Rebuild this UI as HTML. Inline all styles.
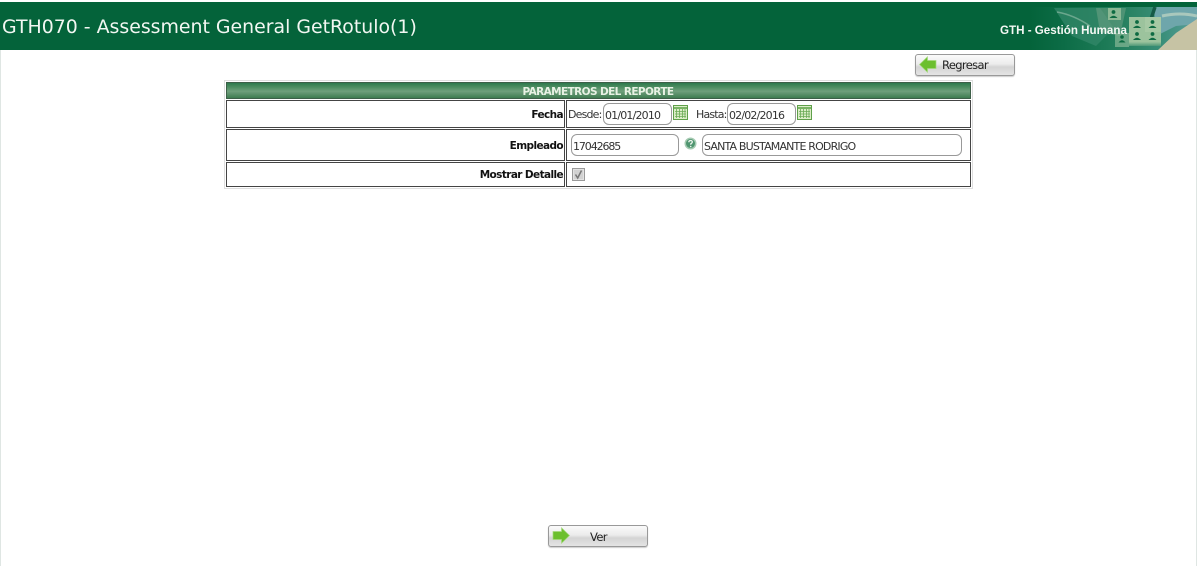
<!DOCTYPE html>
<html><head><meta charset="utf-8"><style>
html,body{margin:0;padding:0;background:#fff;width:1197px;height:566px;overflow:hidden}
body{position:relative;font-family:"Liberation Sans",sans-serif;color:#111}
div,span,svg{position:absolute;box-sizing:border-box}
.cell{border:1px solid #444;background:#fff}
.lbl{font:bold 10.5px/14px "DejaVu Sans",sans-serif;letter-spacing:-.6px;text-align:right;color:#111;white-space:nowrap}
.t{font:11px/14px "DejaVu Sans",sans-serif;letter-spacing:-.83px;color:#333;white-space:nowrap}
.inp{border:1px solid #999;border-radius:6px;background:#fff;font:11px/14px "DejaVu Sans",sans-serif;letter-spacing:-.82px;color:#333;padding-left:1px;white-space:nowrap}
.btn{width:100px;height:22px;border:1px solid #999;border-radius:3px;background:linear-gradient(#fafafa 0,#ececec 45%,#d4d4d4 60%,#e4e4e4 100%);box-shadow:0 1px 1px #ccc}
.btn span{font:11.5px/14px "DejaVu Sans",sans-serif;letter-spacing:-.65px;color:#222;white-space:nowrap}
</style></head><body>
<div style="left:0;top:50px;width:1px;height:516px;background:#dfe6e3"></div>
<div style="left:1196px;top:50px;width:1px;height:516px;background:#dfe6e3"></div>
<div style="left:0;top:2px;width:1197px;height:48px;background:#04633a"></div>

<svg style="left:1030px;top:2px" width="167" height="48" viewBox="0 0 167 48">
<defs>
<linearGradient id="f" x1="0" x2="1" y1="0" y2="0"><stop offset="0" stop-color="#04633a"/><stop offset=".2" stop-color="#0c6c46"/><stop offset=".45" stop-color="#1c7a56"/><stop offset=".65" stop-color="#2f8668"/><stop offset=".8" stop-color="#3a8f7a"/><stop offset="1" stop-color="#5c9f9c"/></linearGradient>
<linearGradient id="tf" x1="0" x2="0" y1="0" y2="1"><stop offset="0" stop-color="#9cc39d"/><stop offset=".7" stop-color="#9cc39d"/><stop offset="1" stop-color="#4f9878"/></linearGradient>
</defs>
<rect y="5" width="167" height="43" fill="url(#f)"/>
<path d="M24 6 L70 6 L84 26 L66 44 L42 34Z" fill="#35896b" opacity=".7"/>
<path d="M27 10 Q44 13 60 24" stroke="#6ba78d" stroke-width="1.500" fill="none"/>
<path d="M66 6 L96 6 L90 34 L70 30Z" fill="#7ea98e" opacity=".45"/>
<path d="M124 5 L167 5 L167 22 L146 24 L126 34Z" fill="#6ea6ab"/>
<path d="M128 48 L146 31 L167 17 L167 48Z" fill="#c6c3a4"/>
<path d="M132 14 Q150 10 167 14" stroke="#a9c8bd" stroke-width="3" fill="none"/>
<path d="M125 5 L118 26" stroke="#155a46" stroke-width="3.500"/>
<g>
<rect x="78" y="6" width="13" height="12" fill="#9cc39d" opacity=".8"/>
<rect x="99" y="15" width="16" height="15" fill="#9cc39d"/>
<rect x="115" y="15" width="16" height="15" fill="#a6c9a4"/>
<rect x="99" y="30" width="16" height="14" fill="url(#tf)"/>
<rect x="115" y="30" width="16" height="14" fill="url(#tf)"/>
<rect x="85" y="31" width="14" height="14" fill="#8fbb9a" opacity=".65"/>
</g>
<g fill="#0d6b42">
<circle cx="83.500" cy="10" r="1.900"/><path d="M79.500 16q4-4.500 8 0z"/>
<circle cx="107" cy="20" r="1.900"/><path d="M103 26q4-4.500 8 0z"/>
<circle cx="122.500" cy="20" r="1.900"/><path d="M118.500 26q4-4.500 8 0z"/>
<circle cx="107" cy="32" r="1.900"/><path d="M103 38q4-4.500 8 0z"/>
<circle cx="122.500" cy="32" r="1.900"/><path d="M118.500 38q4-4.500 8 0z"/>
<circle cx="92" cy="35" r="1.800"/><path d="M88.500 40.500q3.500-4.500 7 0z"/>
</g>
</svg>

<div style="left:2px;top:16px;font:18.9px/22px 'DejaVu Sans',sans-serif;color:#f2f7f2;white-space:nowrap">GTH070 - Assessment General GetRotulo(1)</div>
<div style="left:1000px;top:24px;font:bold 11.6px/14px 'Liberation Sans',sans-serif;color:#f4f8f4;white-space:nowrap">GTH - Gestión Humana</div>

<div class="btn" style="left:915px;top:54px"><svg style="left:3px;top:1px" width="18" height="17" viewBox="0 0 18 17"><path d="M.5 8.500 L8.500 .8 V4.500 H17 V12.500 H8.500 V16.200Z" fill="#6cbf2e" stroke="#a5d97e" stroke-width=".7"/></svg><span style="left:26px;top:3px">Regresar</span></div>

<div style="left:224px;top:80px;width:749px;height:109px;border:1px solid #dedede"></div>
<div style="left:226px;top:82px;width:745px;height:17px;border:1px solid #3d5f48;background:linear-gradient(#2f7a4d 0,#4f8f63 30%,#6f9f7c 55%,#3e7c50 100%)"></div>
<div style="left:226px;top:85px;width:745px;text-align:center;font:bold 10.5px/14px 'DejaVu Sans',sans-serif;letter-spacing:-.6px;color:#e8f2e4;white-space:nowrap;padding-right:1px">PARAMETROS DEL REPORTE</div>

<div class="cell" style="left:226px;top:100px;width:339px;height:28px"></div>
<div class="cell" style="left:566px;top:100px;width:405px;height:28px"></div>
<div class="cell" style="left:226px;top:129px;width:339px;height:32px"></div>
<div class="cell" style="left:566px;top:129px;width:405px;height:32px"></div>
<div class="cell" style="left:226px;top:162px;width:339px;height:25px"></div>
<div class="cell" style="left:566px;top:162px;width:405px;height:25px"></div>

<div class="lbl" style="left:400px;width:163px;top:108px">Fecha</div>
<div class="lbl" style="left:400px;width:163px;top:139px">Empleado</div>
<div class="lbl" style="left:400px;width:163px;top:168px">Mostrar Detalle</div>

<div class="t" style="left:568px;top:108px">Desde:</div>
<div class="inp" style="left:603px;top:103px;width:69px;height:22px;line-height:23px">01/01/2010</div>
<svg style="left:673px;top:105px" width="15" height="15" viewBox="0 0 15 15"><rect x=".5" y=".5" width="14" height="14" fill="#dcedc8" stroke="#5fa04a"/><path d="M1 3H14" stroke="#7ab565" stroke-width="2"/><path d="M3.500 4V13M6.500 4V13M9.500 4V13M12 4V13M2 6.500H13M2 9H13M2 11.500H13" stroke="#6aaa55" stroke-width=".8"/></svg>
<div class="t" style="left:696px;top:108px">Hasta:</div>
<div class="inp" style="left:727px;top:103px;width:69px;height:22px;line-height:23px">02/02/2016</div>
<svg style="left:797px;top:105px" width="15" height="15" viewBox="0 0 15 15"><rect x=".5" y=".5" width="14" height="14" fill="#dcedc8" stroke="#5fa04a"/><path d="M1 3H14" stroke="#7ab565" stroke-width="2"/><path d="M3.500 4V13M6.500 4V13M9.500 4V13M12 4V13M2 6.500H13M2 9H13M2 11.500H13" stroke="#6aaa55" stroke-width=".8"/></svg>

<div class="inp" style="left:571px;top:134px;width:108px;height:22px;line-height:23px;letter-spacing:-1.1px">17042685</div>
<svg style="left:684px;top:137px" width="13" height="13" viewBox="0 0 13 13"><circle cx="6.500" cy="6.500" r="6" fill="#a6cbb2"/><circle cx="6.500" cy="6.500" r="4.500" fill="#4f9570"/><path d="M4.700 5.200Q5 3.500 6.700 3.500Q8.500 3.700 8.300 5.200Q8 6.200 6.800 6.800V7.800" stroke="#eef6ee" stroke-width="1.300" fill="none"/><circle cx="6.700" cy="9.500" r=".8" fill="#eef6ee"/></svg>
<div class="inp" style="left:702px;top:134px;width:260px;height:22px;line-height:23px">SANTA BUSTAMANTE RODRIGO</div>

<svg style="left:572px;top:168px" width="13" height="13" viewBox="0 0 13 13"><rect x=".5" y=".5" width="12" height="12" fill="#e2e2e2" stroke="#9a9a9a"/><rect x="2" y="2" width="9" height="9" fill="#d2d2d2"/><path d="M3.500 6.500L5.700 10L9.500 2.500" stroke="#777" stroke-width="1.500" fill="none"/></svg>

<div class="btn" style="left:548px;top:525px"><svg style="left:3px;top:1px" width="18" height="17" viewBox="0 0 18 17"><path d="M17.500 8.500 L9.500 .8 V4.500 H1 V12.500 H9.500 V16.200Z" fill="#6cbf2e" stroke="#a5d97e" stroke-width=".7"/></svg><span style="left:41px;top:4px">Ver</span></div>
</body></html>
